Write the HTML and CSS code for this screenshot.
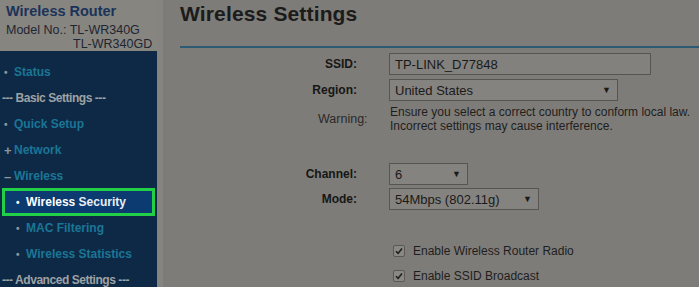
FILE: index.html
```html
<!DOCTYPE html>
<html>
<head>
<meta charset="utf-8">
<link rel="stylesheet" href="styles.css">
</head>
<body>
<div class="page">
  <aside class="sidebar">
    <div class="brand">
      <div class="logo-cut"><span>TP-LINK</span></div>
      <div class="product">Wireless Router</div>
      <div class="model">Model No.: TL-WR340G</div>
      <div class="model model2">TL-WR340GD</div>
    </div>
    <nav class="nav">
      <div class="item"><span class="mark">•</span><span class="link">Status</span></div>
      <div class="item group">--- Basic Settings ---</div>
      <div class="item"><span class="mark">•</span><span class="link">Quick Setup</span></div>
      <div class="item"><span class="mark plus">+</span><span class="link">Network</span></div>
      <div class="item"><span class="mark minus">–</span><span class="link">Wireless</span></div>
      <div class="item sub selected"><span class="mark">•</span><span class="link">Wireless <span class="light">Security</span></span></div>
      <div class="item sub"><span class="mark">•</span><span class="link">MAC Filtering</span></div>
      <div class="item sub"><span class="mark">•</span><span class="link">Wireless Statistics</span></div>
      <div class="item group">--- Advanced Settings ---</div>
    </nav>
  </aside>
  <div class="strip"></div>
  <main class="main">
    <h1 class="title">Wireless Settings</h1>
    <div class="rule"></div>
    <div class="form">
      <div class="row r-ssid">
        <div class="label">SSID:</div>
        <div class="box input-ssid">TP-LINK_D77848</div>
      </div>
      <div class="row r-region">
        <div class="label">Region:</div>
        <div class="box select select-region"><span>United States</span><span class="arrow">▼</span></div>
      </div>
      <div class="row r-warn">
        <div class="label warn-label">Warning:</div>
        <div class="warn-text">Ensure you select a correct country to conform local law.<br>Incorrect settings may cause interference.</div>
      </div>
      <div class="row r-channel">
        <div class="label">Channel:</div>
        <div class="box select select-channel"><span>6</span><span class="arrow">▼</span></div>
      </div>
      <div class="row r-mode">
        <div class="label">Mode:</div>
        <div class="box select select-mode"><span>54Mbps (802.11g)</span><span class="arrow">▼</span></div>
      </div>
      <div class="row r-check1">
        <div class="label"></div>
        <div class="check"><span class="cb"><svg width="8" height="8" viewBox="0 0 8 8"><path d="M1 4.2 L3.1 6.4 L7 1.4" fill="none" stroke="#1e1e1e" stroke-width="1.6"/></svg></span>Enable Wireless Router Radio</div>
      </div>
      <div class="row r-check2">
        <div class="label"></div>
        <div class="check"><span class="cb"><svg width="8" height="8" viewBox="0 0 8 8"><path d="M1 4.2 L3.1 6.4 L7 1.4" fill="none" stroke="#1e1e1e" stroke-width="1.6"/></svg></span>Enable SSID Broadcast</div>
      </div>
    </div>
  </main>
</div>
</body>
</html>
```

FILE: styles.css
```css
html, body {
  margin: 0;
  padding: 0;
}
body {
  background: #7e7c78;
  font-family: "Liberation Sans", Arial, sans-serif;
  width: 699px;
  height: 287px;
  overflow: hidden;
}
.page {
  display: flex;
  height: 287px;
}
.sidebar {
  width: 157px;
  display: flex;
  flex-direction: column;
  flex-shrink: 0;
}
.brand {
  height: 52px;
  background: #878580;
  padding-left: 6px;
  box-sizing: border-box;
  color: #1d3657;
}
.logo-cut {
  height: 3px;
  overflow: hidden;
}
.logo-cut span {
  display: block;
  margin-top: -13px;
  font-size: 16px;
  font-weight: bold;
  line-height: 16px;
  color: #b05a2a;
}
.product {
  font-size: 14.5px;
  font-weight: bold;
  line-height: 17px;
  color: #1a3358;
}
.model {
  font-size: 12.5px;
  line-height: 13px;
  color: #1e2632;
  margin-top: 4px;
}
.model2 {
  margin-top: 1px;
  padding-left: 67px;
}
.nav {
  flex: 1;
  background: #0e2945;
  padding-top: 8px;
}
.item {
  height: 26px;
  display: flex;
  align-items: center;
  font-size: 12px;
  font-weight: bold;
  color: #1b7696;
  white-space: nowrap;
}
.mark {
  width: 10px;
  margin-left: 4px;
  color: #8b979e;
  font-size: 10px;
}
.mark.plus, .mark.minus {
  font-size: 13px;
}
.group {
  color: #9ea2a4;
  padding-left: 2px;
  letter-spacing: -0.45px;
}
.sub .mark {
  margin-left: 16px;
}
.selected {
  height: 28px;
  margin: -1px 2px;
  border: 3px solid #22d048;
  box-sizing: border-box;
  background: #0b3b70;
  color: #ffffff;
}
.selected .mark {
  margin-left: 11px;
  color: #ffffff;
}
.selected .light {
  color: #e8eef5;
}
.strip {
  width: 6px;
  background: #86847f;
  flex-shrink: 0;
}
.main {
  flex: 1;
  padding-left: 17px;
}
.title {
  margin: 0;
  padding-top: 2px;
  font-size: 21px;
  font-weight: bold;
  line-height: 24px;
  color: #1b1b1b;
  letter-spacing: 0.15px;
}
.rule {
  margin-top: 20px;
  height: 2px;
  background: #2d5a73;
}
.form {
  display: flex;
  flex-direction: column;
}
.row {
  display: flex;
  align-items: center;
}
.label {
  width: 177px;
  margin-right: 32px;
  text-align: right;
  font-size: 12px;
  font-weight: bold;
  color: #161616;
  flex-shrink: 0;
}
.warn-label {
  font-weight: normal;
  color: #2a2a2a;
  text-align: left;
  padding-left: 138px;
  box-sizing: border-box;
  font-size: 12.5px;
}
.box {
  height: 22px;
  box-sizing: border-box;
  border: 1px solid #565553;
  background: #83817e;
  font-size: 13px;
  color: #1a1a1a;
  padding-left: 5px;
  display: flex;
  align-items: center;
}
.r-ssid { margin-top: 5px; }
.input-ssid { width: 262px; }
.r-region { margin-top: 4px; }
.select {
  justify-content: space-between;
  padding-right: 6px;
  background: #85837f;
}
.arrow {
  font-size: 9px;
  color: #1a1a1a;
}
.select-region { width: 229px; }
.r-warn { margin-top: 4px; }
.warn-text {
  font-size: 12px;
  line-height: 14px;
  color: #1e1e1e;
  padding-left: 1px;
  white-space: nowrap;
}
.r-channel { margin-top: 30px; }
.select-channel { width: 79px; }
.r-mode { margin-top: 3px; }
.select-mode { width: 150px; }
.r-check1 { margin-top: 32px; height: 18px; }
.r-check2 { margin-top: 7px; height: 18px; }
.check {
  display: flex;
  align-items: center;
  font-size: 12px;
  color: #1e1e1e;
  padding-left: 4px;
}
.cb {
  width: 12px;
  height: 12px;
  box-sizing: border-box;
  border: 1px solid #5a5957;
  border-radius: 2px;
  background: #8a8884;
  margin-right: 8px;
  display: flex;
  align-items: center;
  justify-content: center;
}
```
